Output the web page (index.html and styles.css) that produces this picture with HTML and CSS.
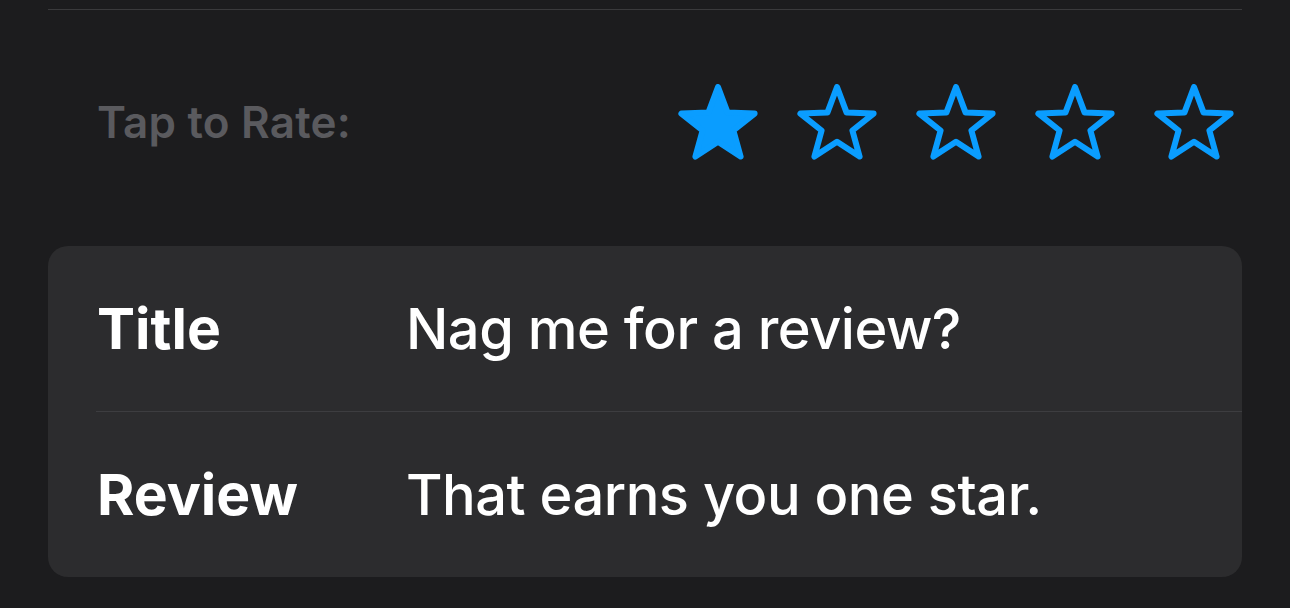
FILE: index.html
```html
<!DOCTYPE html>
<html>
<head>
<title>Rate</title>
<link rel="stylesheet" href="styles.css">
</head>
<body>

<div class="rule"></div>

<div class="rate">
    <p class="rate-label">Tap to Rate:</p>
    <div class="stars">
        <svg class="star filled" viewBox="0 0 80 76"><path d="M40 3L49.5 28.4L76.6 29.6L55.4 46.5L62.6 72.6L40 57.7L17.4 72.6L24.6 46.5L3.4 29.6L30.5 28.4Z"/></svg>
        <svg class="star" viewBox="0 0 80 76"><path d="M40 3L49.5 28.4L76.6 29.6L55.4 46.5L62.6 72.6L40 57.7L17.4 72.6L24.6 46.5L3.4 29.6L30.5 28.4Z"/></svg>
        <svg class="star" viewBox="0 0 80 76"><path d="M40 3L49.5 28.4L76.6 29.6L55.4 46.5L62.6 72.6L40 57.7L17.4 72.6L24.6 46.5L3.4 29.6L30.5 28.4Z"/></svg>
        <svg class="star" viewBox="0 0 80 76"><path d="M40 3L49.5 28.4L76.6 29.6L55.4 46.5L62.6 72.6L40 57.7L17.4 72.6L24.6 46.5L3.4 29.6L30.5 28.4Z"/></svg>
        <svg class="star" viewBox="0 0 80 76"><path d="M40 3L49.5 28.4L76.6 29.6L55.4 46.5L62.6 72.6L40 57.7L17.4 72.6L24.6 46.5L3.4 29.6L30.5 28.4Z"/></svg>
    </div>
</div>

<div class="card">
    <div class="row">
        <span class="label">Title</span>
        <span class="value">Nag me for a review?</span>
    </div>
    <div class="row">
        <span class="label">Review</span>
        <span class="value">That earns you one star.</span>
    </div>
</div>

</body>
</html>
```

FILE: styles.css
```css
body {
    background: #1c1c1e;
    color: white;
    font-family: Inter, "Noto Sans", sans-serif;
    margin: 0;
    padding: 0;
}

.rule {
    height: 1px;
    background: #3a3a3c;
    margin: 9px 48px 0;
}

.rate {
    display: flex;
    align-items: center;
    justify-content: space-between;
    height: 76px;
    margin: 74px 48px 86px;
    padding: 0 8px 0 49px;
}

.rate-label {
    margin: 0;
    font-size: 44px;
    font-weight: 600;
    letter-spacing: 0.2px;
    color: #5a5a5e;
}

.stars {
    display: flex;
    gap: 39px;
}

.star {
    width: 80px;
    height: 76px;
    display: block;
}

.star path {
    fill: none;
    stroke: #0a9dff;
    stroke-width: 6;
    stroke-linejoin: round;
}

.star.filled path {
    fill: #0a9dff;
}

.card {
    background: #2c2c2e;
    border-radius: 20px;
    margin: 0 48px;
}

.row {
    display: flex;
    align-items: center;
    height: 165px;
    margin-left: 48px;
    padding-left: 1px;
}

.row + .row {
    border-top: 1px solid #3d3d40;
}

.label {
    width: 309px;
    font-size: 57px;
    font-weight: 700;
}

.value {
    font-size: 56px;
    font-weight: 500;
    letter-spacing: -0.5px;
}
```
